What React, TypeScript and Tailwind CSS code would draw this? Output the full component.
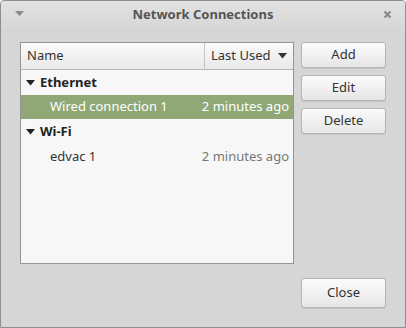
import React from "react";

const font = { fontFamily: '"Noto Sans", "Open Sans", sans-serif' };

function Btn({ label, tall }: { label: string; tall?: boolean }) {
  return (
    <button
      className={`w-[85px] ${tall ? "h-[30px]" : "h-[26px]"} rounded-[3px] border border-[#b5b5b5] bg-gradient-to-b from-[#fbfbfb] to-[#e6e6e6] text-[13px] text-[#333] shadow-[0_1px_0_rgba(0,0,0,0.08)]`}
    >
      {label}
    </button>
  );
}

function Caret({ color = "#222" }: { color?: string }) {
  return (
    <svg width="9" height="6" viewBox="0 0 9 6">
      <path d="M0 0 H9 L4.5 5.5 Z" fill={color} />
    </svg>
  );
}

export default function App() {
  return (
    <div
      style={font}
      className="w-[406px] h-[328px] bg-[#d6d6d6] border border-[#8e8e8e] rounded-t-[4px] flex flex-col overflow-hidden"
    >
      {/* title bar */}
      <div className="h-[29px] shrink-0 flex items-start pt-[4px] px-[12px] bg-gradient-to-b from-[#e2e2e2] to-[#d6d6d6]">
        <div className="w-[20px] flex pt-[6px] pl-[2px]">
          <svg width="9" height="5" viewBox="0 0 9 5">
            <path d="M0 0 H9 L4.5 5 Z" fill="#8a8a8a" />
          </svg>
        </div>
        <div className="flex-1 text-center text-[13px] leading-[18px] font-bold text-[#555]">
          Network Connections
        </div>
        <div className="w-[20px] flex justify-end pt-[5px] pr-[1px]">
          <svg width="9" height="9" viewBox="0 0 9 9">
            <path d="M1.5 1.5 L7.5 7.5 M7.5 1.5 L1.5 7.5" stroke="#8a8a8a" strokeWidth="2.2" />
          </svg>
        </div>
      </div>

      <div className="flex flex-1 pl-[19px] pt-[12px] pb-[19px] pr-[19px] gap-[7px]">
        {/* tree */}
        <div className="w-[275px] h-[222px] border border-[#959595] bg-[#f7f7f7] flex flex-col text-[13px]">
          <div className="h-[27px] flex border-b border-[#b8b8b8] bg-gradient-to-b from-[#fafafa] to-[#e9e9e9] text-[#333]">
            <div className="w-[184px] flex items-center pl-[6px] border-r border-[#c4c4c4]">Name</div>
            <div className="flex-1 flex items-center pl-[6px] gap-[8px]">
              Last Used
              <Caret color="#333" />
            </div>
          </div>
          <div className="h-[25px] flex items-center pl-[5px] gap-[5px] font-bold text-[#222]">
            <Caret />
            Ethernet
          </div>
          <div className="h-[24px] flex items-center justify-between pl-[29px] pr-[4px] bg-[#8fa876] text-white">
            <span>Wired connection 1</span>
            <span>2 minutes ago</span>
          </div>
          <div className="h-[25px] flex items-center pl-[5px] gap-[5px] font-bold text-[#222]">
            <Caret />
            Wi-Fi
          </div>
          <div className="h-[25px] flex items-center justify-between pl-[29px] pr-[4px] text-[#333]">
            <span>edvac 1</span>
            <span className="text-[#777]">2 minutes ago</span>
          </div>
        </div>

        {/* buttons */}
        <div className="flex flex-col justify-between">
          <div className="flex flex-col gap-[7px]">
            <Btn label="Add" />
            <Btn label="Edit" />
            <Btn label="Delete" />
          </div>
          <Btn label="Close" tall />
        </div>
      </div>
    </div>
  );
}
